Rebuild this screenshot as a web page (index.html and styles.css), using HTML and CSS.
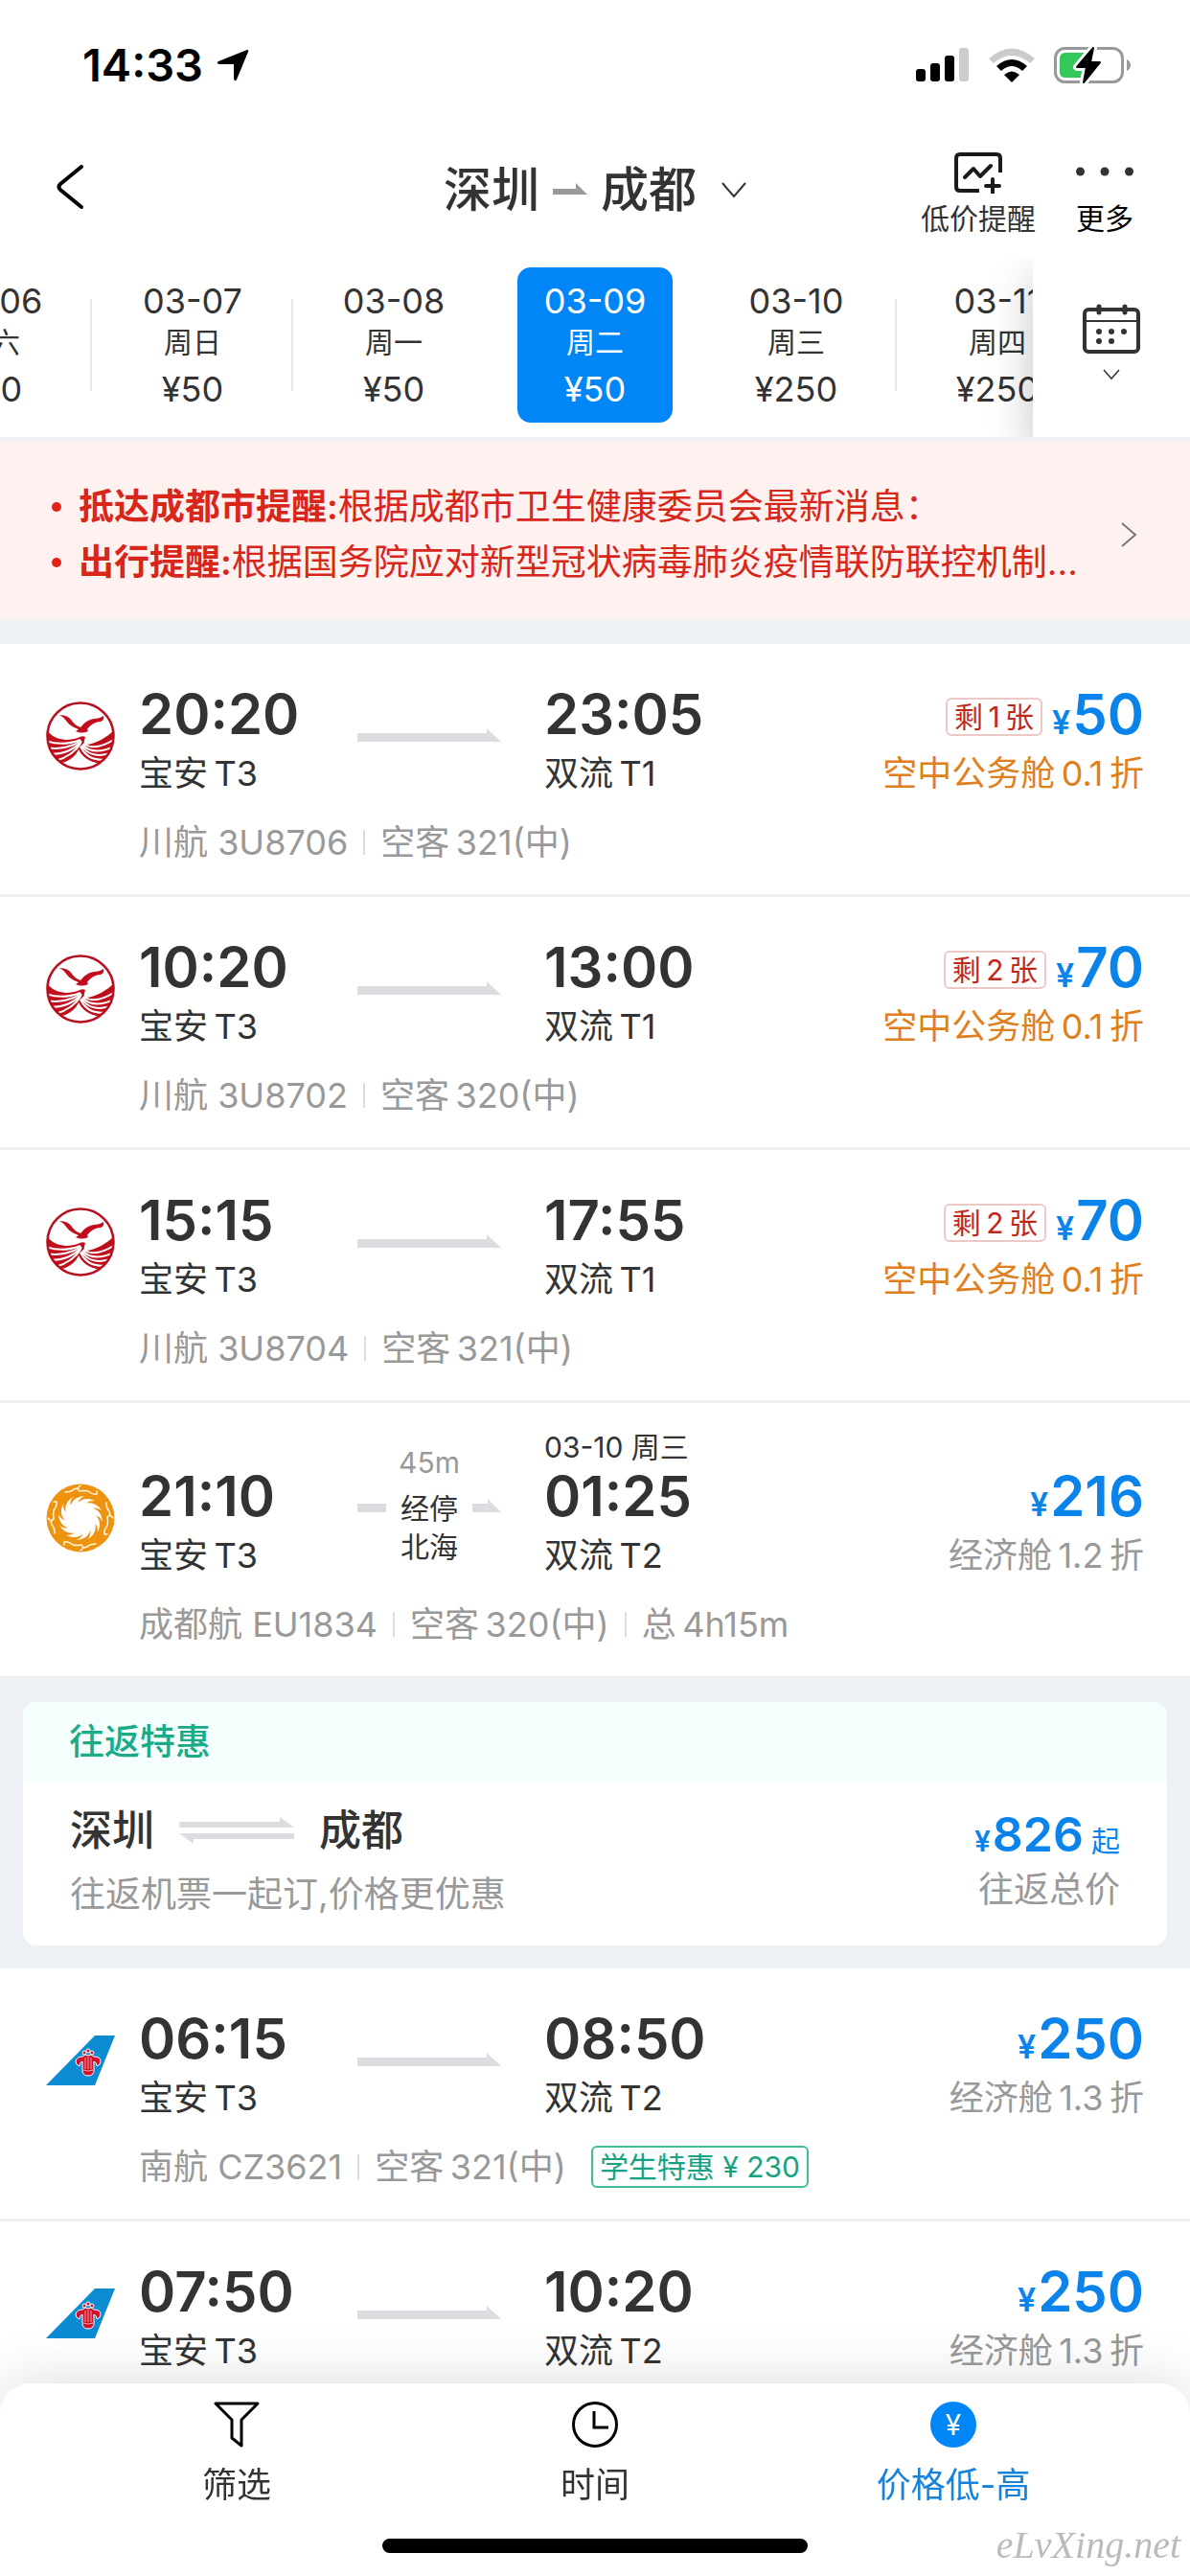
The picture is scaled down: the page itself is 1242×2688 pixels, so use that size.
FILE: index.html
```html
<!DOCTYPE html>
<html lang="zh-CN">
  <head>
    <meta charset="UTF-8" />
    <meta name="viewport" content="width=device-width, initial-scale=1.0" />
    <title>深圳 - 成都</title>
    <link rel="stylesheet" href="styles.css">
  </head>
  <body>
    <!-- shared shapes -->
    <svg class="sprite" aria-hidden="true">
      <symbol id="logo-3u" viewBox="0 0 72 72">
        <clipPath id="disc"><circle cx="36" cy="36" r="35" /></clipPath>
        <g clip-path="url(#disc)">
          <path fill="#c20d1c" d="M0 29C9 42 24 41 33 38Q38 35 41 37Q38 46 42 45C53 44 64 37 72 29V72H0Z" />
          <g fill="none" stroke="#fff" stroke-width="2">
            <path d="M0 41C14 46 28 43 36 40" />
            <path d="M1 48C15 51 29 46 37 41" />
            <path d="M5 55C19 55 30 49 37 42" />
            <path d="M10 62C23 58 31 52 36 44" />
            <path d="M72 39C60 47 48 50 39 44" />
            <path d="M72 46C60 53 46 54 38 45" />
            <path d="M70 53C57 58 44 57 37 46" />
            <path d="M64 60C53 62 42 59 36 47" />
          </g>
          <path fill="#fff" d="M14 65C25 62 31 57 34 50C38 58 45 63 57 65L48 72H24Z" />
        </g>
        <circle cx="36" cy="36" r="34.5" fill="none" stroke="#b8101e" stroke-width="2.6" />
        <path fill="#c20d1c" d="M14 14Q23 14 27 20Q30 25 36 27Q42 19 50 18Q56 18 60 15Q61 20 57 21Q49 21 43 29L44 31Q37 34 31 31L34 29Q25 26 21 20Q18 16 14 14Z" />
      </symbol>
      <symbol id="logo-eu" viewBox="0 0 72 72">
        <circle cx="36" cy="36" r="35.5" fill="#ee930f" />
        <circle cx="36" cy="36" r="16" fill="#fff" />
        <g fill="#fff">
          <path id="ray" d="M25 26Q27 14 40 13Q32 17 34 23Z" />
          <use href="#ray" transform="rotate(30 36 36)" />
          <use href="#ray" transform="rotate(60 36 36)" />
          <use href="#ray" transform="rotate(90 36 36)" />
          <use href="#ray" transform="rotate(120 36 36)" />
          <use href="#ray" transform="rotate(150 36 36)" />
          <use href="#ray" transform="rotate(180 36 36)" />
          <use href="#ray" transform="rotate(210 36 36)" />
          <use href="#ray" transform="rotate(240 36 36)" />
          <use href="#ray" transform="rotate(270 36 36)" />
          <use href="#ray" transform="rotate(300 36 36)" />
          <use href="#ray" transform="rotate(330 36 36)" />
        </g>
        <g fill="none" stroke="#fff3d8" stroke-width="1.6" stroke-linecap="round">
          <path id="bird" d="M20 9Q26 9 29 6Q33 4 35 8Q40 7 44 8Q49 12 53 11M33 5L36 2M53 11L53 8" />
          <use href="#bird" transform="rotate(90 36 36)" />
          <use href="#bird" transform="rotate(180 36 36)" />
          <use href="#bird" transform="rotate(270 36 36)" />
        </g>
      </symbol>
      <symbol id="logo-cz" viewBox="0 0 72 72">
        <path fill="#0a8bd2" d="M0 62L51 10H72L51 62Z" />
        <g fill="#d0122b" stroke="#fff" stroke-width="1">
          <circle cx="40" cy="28" r="2" />
          <circle cx="44" cy="26" r="2" />
          <circle cx="48" cy="28" r="2" />
          <path d="M38 46V37Q35 38 35 42Q31 41 31 37Q32 32 38 32L41 30L44 31L47 30L50 32Q57 32 57 37Q57 41 53 42Q53 38 50 37V46Q50 52 44 52Q38 52 38 46Z" />
          <path d="M41 33V45M44 32V45M47 33V45M39 46Q44 48 49 46" fill="none" stroke-width="0.6" />
        </g>
      </symbol>
      <symbol id="arrow" viewBox="0 0 150 14">
        <path fill="#dcdde0" d="M0 5H135V0L150 14H0Z" />
      </symbol>
    </svg>

    <div class="status-bar">
      <div class="clock">
        <span>14:33</span>
        <svg width="34" height="34" viewBox="0 0 34 34"><path d="M32 1Q34 1 33 3L21 32Q19 35 18 31V16H3Q-1 15 2 13Z" /></svg>
      </div>
      <div class="signals">
        <svg width="56" height="36" viewBox="0 0 56 36">
          <rect x="0" y="22" width="10" height="13" rx="3" />
          <rect x="15" y="16" width="10" height="19" rx="3" />
          <rect x="30" y="8" width="10" height="27" rx="3" />
          <rect x="45" y="0" width="10" height="35" rx="3" fill="#ccc" />
        </svg>
        <svg width="48" height="36" viewBox="0 0 48 36">
          <path fill="#ccc" d="M0 11Q24 -10 48 11L43 16Q24 0 5 16Z" />
          <path d="M8 19Q24 5 40 19L35 24Q24 14 13 24Z" />
          <path d="M16 28Q24 21 32 28L24 36Z" />
        </svg>
        <svg width="80" height="40" viewBox="0 0 80 40">
          <rect x="1.5" y="2.5" width="70" height="35" rx="10" fill="#fff" stroke="#999" stroke-width="3" />
          <path fill="#34c759" d="M12 7H36V33H12Q6 33 6 27V13Q6 7 12 7Z" />
          <path fill="#999" d="M76 14Q80 16 80 20Q80 24 76 26Z" />
          <path stroke="#fff" stroke-width="8" stroke-linejoin="round" d="M41 2L24 22H34L31 38L48 17H38Z" />
          <path stroke="#000" stroke-width="2" stroke-linejoin="round" d="M41 2L24 22H34L31 38L48 17H38Z" />
        </svg>
      </div>
    </div>

    <header class="header">
      <button type="button" class="back" aria-label="返回">
        <svg width="28" height="46" viewBox="0 0 28 46"><path d="M26 2L4 20Q1 23 4 26L26 44" fill="none" stroke="#000" stroke-width="4" stroke-linecap="round" /></svg>
      </button>
      <button type="button" class="route">
        <span>深圳</span>
        <svg width="36" height="14" viewBox="0 0 36 14"><path fill="#999" d="M0 6H24V0L36 12H0Z" /></svg>
        <span>成都</span>
        <svg class="route-more" width="26" height="18" viewBox="0 0 26 18"><path d="M1 2L13 16L25 2" fill="none" stroke="#333" stroke-width="2" /></svg>
      </button>
      <div class="actions">
        <button type="button" class="action">
          <svg width="52" height="44" viewBox="0 0 52 44" fill="none" stroke="#1c1a1c" stroke-width="4">
            <path d="M49 22V7Q49 3 45 3H7Q3 3 3 7V37Q3 41 7 41H27" />
            <path d="M12 27L21 18L28 26L39 15" stroke-linecap="round" stroke-linejoin="round" />
            <path d="M41 29V43M34 36H48" stroke-linecap="round" />
          </svg>
          低价提醒
        </button>
        <button type="button" class="action dark">
          <svg width="60" height="44" viewBox="0 0 60 44" fill="#333">
            <circle cx="4.5" cy="21" r="4.5" />
            <circle cx="30" cy="21" r="4.5" />
            <circle cx="55.5" cy="21" r="4.5" />
          </svg>
          更多
        </button>
      </div>
    </header>

    <nav class="dates">
      <div class="days">
        <button type="button" class="day">03-06<small>周六</small>¥50</button>
        <button type="button" class="day">03-07<small>周日</small>¥50</button>
        <button type="button" class="day">03-08<small>周一</small>¥50</button>
        <button type="button" class="day active">03-09<small>周二</small>¥50</button>
        <button type="button" class="day">03-10<small>周三</small>¥250</button>
        <button type="button" class="day">03-11<small>周四</small>¥250</button>
      </div>
      <button type="button" class="calendar" aria-label="日历">
        <svg width="60" height="52" viewBox="0 0 60 52">
          <rect x="2" y="6" width="56" height="44" rx="4" fill="none" stroke="#333" stroke-width="4" />
          <path d="M2 18H58" stroke="#333" stroke-width="2" />
          <path d="M17 3V9M44 3V9" stroke="#333" stroke-width="5" stroke-linecap="round" />
          <g fill="#333">
            <circle cx="17" cy="29" r="3" /><circle cx="30" cy="29" r="3" /><circle cx="43" cy="29" r="3" />
            <circle cx="17" cy="39" r="3" /><circle cx="30" cy="39" r="3" />
          </g>
        </svg>
        <svg width="18" height="12" viewBox="0 0 18 12"><path d="M1 1L9 10L17 1" fill="none" stroke="#333" stroke-width="1.5" /></svg>
      </button>
    </nav>

    <a class="notice" href="#notice">
      <ul>
        <li><b>抵达成都市提醒:</b>根据成都市卫生健康委员会最新消息：</li>
        <li><b>出行提醒:</b>根据国务院应对新型冠状病毒肺炎疫情联防联控机制...</li>
      </ul>
      <svg width="18" height="26" viewBox="0 0 18 26"><path d="M2 1L16 13L2 25" fill="none" stroke="#777" stroke-width="2" /></svg>
    </a>

    <main>
      <section class="flights">
        <article class="flight">
          <svg class="logo"><use href="#logo-3u" /></svg>
          <div class="place"><time>20:20</time><p>宝安&thinsp;T3</p></div>
          <svg class="arrow"><use href="#arrow" /></svg>
          <div class="place"><time>23:05</time><p>双流&thinsp;T1</p></div>
          <div class="fare">
            <div class="price"><span class="left">剩&thinsp;1&thinsp;张</span><i>¥</i>50</div>
            <p class="business">空中公务舱&thinsp;0.1&thinsp;折</p>
          </div>
          <div class="meta"><span>川航 3U8706</span><span>空客&thinsp;321(中)</span></div>
        </article>

        <article class="flight">
          <svg class="logo"><use href="#logo-3u" /></svg>
          <div class="place"><time>10:20</time><p>宝安&thinsp;T3</p></div>
          <svg class="arrow"><use href="#arrow" /></svg>
          <div class="place"><time>13:00</time><p>双流&thinsp;T1</p></div>
          <div class="fare">
            <div class="price"><span class="left">剩&thinsp;2&thinsp;张</span><i>¥</i>70</div>
            <p class="business">空中公务舱&thinsp;0.1&thinsp;折</p>
          </div>
          <div class="meta"><span>川航 3U8702</span><span>空客&thinsp;320(中)</span></div>
        </article>

        <article class="flight">
          <svg class="logo"><use href="#logo-3u" /></svg>
          <div class="place"><time>15:15</time><p>宝安&thinsp;T3</p></div>
          <svg class="arrow"><use href="#arrow" /></svg>
          <div class="place"><time>17:55</time><p>双流&thinsp;T1</p></div>
          <div class="fare">
            <div class="price"><span class="left">剩&thinsp;2&thinsp;张</span><i>¥</i>70</div>
            <p class="business">空中公务舱&thinsp;0.1&thinsp;折</p>
          </div>
          <div class="meta"><span>川航 3U8704</span><span>空客&thinsp;321(中)</span></div>
        </article>

        <article class="flight with-stop">
          <svg class="logo"><use href="#logo-eu" /></svg>
          <div class="place"><time>21:10</time><p>宝安&thinsp;T3</p></div>
          <div class="stop">
            <svg width="30" height="14" viewBox="0 0 30 14"><path fill="#dcdde0" d="M0 5H30V14H0Z" /></svg>
            <p><span>45m</span>经停<br>北海</p>
            <svg width="30" height="14" viewBox="0 0 30 14"><path fill="#dcdde0" d="M0 5H16V0L30 14H0Z" /></svg>
          </div>
          <div class="place"><small>03-10 周三</small><time>01:25</time><p>双流&thinsp;T2</p></div>
          <div class="fare">
            <div class="price"><i>¥</i>216</div>
            <p>经济舱&thinsp;1.2&thinsp;折</p>
          </div>
          <div class="meta"><span>成都航 EU1834</span><span>空客&thinsp;320(中)</span><span>总&thinsp;4h15m</span></div>
        </article>
      </section>

      <section class="round-trip">
        <h2>往返特惠</h2>
        <div class="round-body">
          <div>
            <div class="round-route">
              <span>深圳</span>
              <svg width="120" height="28" viewBox="0 0 120 28" fill="#dcdde0">
                <path d="M0 5H105V0L120 11H0Z" />
                <path d="M120 23H15V28L0 17H120Z" />
              </svg>
              <span>成都</span>
            </div>
            <p>往返机票一起订,价格更优惠</p>
          </div>
          <div class="round-fare">
            <div class="round-price"><i>¥</i>826<small>起</small></div>
            <p>往返总价</p>
          </div>
        </div>
      </section>

      <section class="flights">
        <article class="flight">
          <svg class="logo"><use href="#logo-cz" /></svg>
          <div class="place"><time>06:15</time><p>宝安&thinsp;T3</p></div>
          <svg class="arrow"><use href="#arrow" /></svg>
          <div class="place"><time>08:50</time><p>双流&thinsp;T2</p></div>
          <div class="fare">
            <div class="price"><i>¥</i>250</div>
            <p>经济舱&thinsp;1.3&thinsp;折</p>
          </div>
          <div class="meta"><span>南航 CZ3621</span><span>空客&thinsp;321(中)</span><em>学生特惠 ¥ 230</em></div>
        </article>

        <article class="flight">
          <svg class="logo"><use href="#logo-cz" /></svg>
          <div class="place"><time>07:50</time><p>宝安&thinsp;T3</p></div>
          <svg class="arrow"><use href="#arrow" /></svg>
          <div class="place"><time>10:20</time><p>双流&thinsp;T2</p></div>
          <div class="fare">
            <div class="price"><i>¥</i>250</div>
            <p>经济舱&thinsp;1.3&thinsp;折</p>
          </div>
        </article>
      </section>
    </main>

    <footer class="tab-bar">
      <div class="tabs">
        <button type="button" class="tab">
          <svg width="48" height="48" viewBox="0 0 48 48"><path d="M2 2H46L29 19V46L19 38V19Z" fill="none" stroke="#000" stroke-width="3" stroke-linejoin="round" /></svg>
          筛选
        </button>
        <button type="button" class="tab">
          <svg width="48" height="48" viewBox="0 0 48 48" fill="none" stroke="#000" stroke-width="3"><circle cx="24" cy="24" r="22.5" /><path d="M23 10V27H38" /></svg>
          时间
        </button>
        <button type="button" class="tab active">
          <span class="coin">¥</span>
          价格低-高
        </button>
      </div>
      <div class="home-line"></div>
      <span class="site">eLvXing.net</span>
    </footer>
  </body>
</html>
```
FILE: styles.css
```css
html {
  box-sizing: border-box;
}

*,
*:before,
*:after {
  box-sizing: inherit;
}

body,
h2,
p,
ul {
  margin: 0;
  padding: 0;
}

body {
  font-family: Inter, "Noto Sans CJK SC", sans-serif;
  font-size: 36px;
  color: #333;
  background-color: #fff;
}

button {
  border: none;
  background: none;
  padding: 0;
  margin: 0;
  font-family: inherit;
  font-size: inherit;
  color: inherit;
  cursor: pointer;
}

svg {
  display: block;
  flex-shrink: 0;
}

i,
em {
  font-style: normal;
}

.sprite {
  position: absolute;
  width: 0;
  height: 0;
}

/* status bar */
.status-bar {
  display: flex;
  justify-content: space-between;
  align-items: center;
  padding: 34px 62px 24px 86px;
  color: #000;
}

.clock {
  display: flex;
  align-items: center;
  gap: 14px;
  font-size: 47px;
  font-weight: 600;
  line-height: 68px;
}

.signals {
  display: flex;
  align-items: center;
  gap: 20px;
}

/* header */
.header {
  display: grid;
  grid-template-columns: 1fr auto 1fr;
  align-items: center;
  height: 144px;
  padding: 0 59px;
}

.back {
  justify-self: start;
  padding-bottom: 6px;
}

.route {
  display: flex;
  align-items: center;
  gap: 14px;
  font-size: 50px;
  font-weight: 500;
  line-height: 60px;
}

.route-more {
  margin-left: 12px;
}

.actions {
  display: flex;
  justify-self: end;
  gap: 42px;
  padding-top: 8px;
}

.action {
  display: flex;
  flex-direction: column;
  align-items: center;
  gap: 8px;
  font-size: 30px;
  line-height: 36px;

  &.dark {
    color: #000;
  }
}

/* date strip */
.dates {
  display: flex;
  overflow: hidden;
  border-bottom: 3px solid #edf0f5;
}

.days {
  flex: 1;
  display: flex;
  min-width: 0;
  margin-left: -114px;
  padding: 9px 0 15px;
}

.day {
  position: relative;
  flex: 0 0 162px;
  height: 162px;
  margin: 0 24px;
  padding: 13px 0;
  border-radius: 14px;
  line-height: 44px;

  small {
    display: block;
    font-size: 30px;
    line-height: 42px;
    margin-bottom: 6px;
  }

  &:after {
    content: "";
    position: absolute;
    right: -24px;
    top: 33px;
    height: 96px;
    border-right: 2px solid #e6e6e6;
  }

  &.active {
    background-color: #0086f6;
    color: #fff;
  }

  &.active:after,
  &:has(+ .active):after {
    display: none;
  }
}

.calendar {
  position: relative;
  width: 164px;
  padding-bottom: 12px;
  display: flex;
  flex-direction: column;
  align-items: center;
  justify-content: center;
  gap: 16px;
  background-color: #fff;
  box-shadow: 0 20px 44px rgba(0, 0, 0, 0.24);
}

/* notice */
.notice {
  display: flex;
  justify-content: space-between;
  align-items: center;
  padding: 41px 55px 31px 54px;
  background-color: #fef2f0;
  color: #d8261a;
  text-decoration: none;
  border-bottom: 1px solid #edf0f5;

  ul {
    list-style: none;
    min-width: 0;
  }

  li {
    display: flex;
    align-items: center;
    font-size: 37px;
    line-height: 58px;
    white-space: nowrap;
  }

  li:before {
    content: "";
    width: 10px;
    height: 10px;
    margin-right: 18px;
    border-radius: 50%;
    background-color: #e02418;
  }

  b {
    font-weight: 600;
  }
}

/* flights */
main {
  background-color: #edf0f5;
  padding-top: 24px;
}

.flights {
  background-color: #fff;
}

.flight {
  display: grid;
  grid-template-columns: 72px 203px 150px auto 1fr;
  column-gap: 25px;
  align-items: end;
  padding: 40px 48px 25px;
  border-bottom: 3px solid #eceeef;

  &.with-stop {
    padding-top: 28px;
  }

  &:last-child {
    border-bottom: none;
  }

  p {
    line-height: 58px;
    white-space: nowrap;
  }
}

.logo {
  width: 72px;
  height: 72px;
  margin-bottom: 32px;
}

.arrow {
  width: 150px;
  height: 14px;
  margin-bottom: 62px;
}

.place {
  time {
    display: block;
    font-size: 58px;
    font-weight: 600;
    line-height: 66px;
  }

  small {
    display: block;
    font-size: 30px;
    line-height: 36px;
  }
}

.arrow + .place,
.stop + .place {
  margin-left: 20px;
}

.stop {
  display: flex;
  justify-content: space-between;
  align-items: end;
  margin-bottom: 18px;

  svg {
    margin-bottom: 56px;
  }

  p {
    font-size: 30px;
    line-height: 40px;
    text-align: center;
  }

  span {
    display: block;
    margin-bottom: 8px;
    color: #999;
  }
}

.fare {
  text-align: right;
  color: #999;

  .business {
    color: #e07f1c;
  }
}

.price {
  display: flex;
  justify-content: flex-end;
  align-items: baseline;
  font-size: 58px;
  font-weight: 600;
  line-height: 66px;
  color: #0a84ea;

  i {
    font-size: 34px;
    line-height: 36px;
    margin-right: 2px;
  }
}

.left {
  align-self: center;
  margin: 6px 10px 0 0;
  padding: 0 7px;
  border: 2px solid #ecc9c6;
  border-radius: 6px;
  font-size: 30px;
  font-weight: 400;
  line-height: 36px;
  color: #c3271c;
}

.meta {
  grid-column: 2 / -1;
  display: flex;
  align-items: center;
  margin-top: 14px;
  line-height: 58px;
  color: #999;

  span + span {
    display: flex;
    align-items: center;
  }

  span + span:before {
    content: "";
    height: 26px;
    margin: 0 16px;
    border-left: 2px solid #ddd;
  }

  em {
    margin-left: 26px;
    padding: 0 7px;
    border: 2px solid #45b99c;
    border-radius: 6px;
    font-size: 30px;
    line-height: 40px;
    color: #17a382;
  }
}

/* round trip */
.round-trip {
  margin: 27px 24px 24px;
  border-radius: 14px;
  background-color: #fff;
  overflow: hidden;

  h2 {
    padding: 0 48px;
    background-color: #f4fefc;
    color: #1aab87;
    font-size: 37px;
    font-weight: 500;
    line-height: 83px;
  }
}

.round-body {
  display: flex;
  justify-content: space-between;
  padding: 20px 49px 24px;

  p {
    font-size: 37px;
    line-height: 58px;
    color: #999;
  }
}

.round-route {
  display: flex;
  align-items: center;
  gap: 26px;
  font-size: 44px;
  font-weight: 500;
  line-height: 62px;
  margin-bottom: 7px;
}

.round-fare {
  text-align: right;
}

.round-price {
  display: flex;
  justify-content: flex-end;
  align-items: baseline;
  padding-top: 6px;
  font-size: 50px;
  font-weight: 600;
  line-height: 58px;
  color: #0a84ea;

  i {
    font-size: 30px;
    line-height: 36px;
    margin-right: 2px;
  }

  small {
    font-size: 30px;
    font-weight: 400;
    line-height: 36px;
    margin-left: 8px;
  }
}

/* bottom bar */
.tab-bar {
  position: fixed;
  left: 0;
  right: 0;
  bottom: 0;
  padding: 19px 60px 24px;
  border-radius: 32px 32px 0 0;
  background-color: #fff;
  box-shadow: 0 -4px 60px rgba(0, 0, 0, 0.13);
}

.tabs {
  display: grid;
  grid-template-columns: repeat(3, 1fr);
}

.tab {
  display: flex;
  flex-direction: column;
  align-items: center;
  gap: 14px;
  line-height: 50px;

  &.active {
    color: #1583dc;
  }
}

.coin {
  width: 48px;
  height: 48px;
  border-radius: 50%;
  background-color: #0086f6;
  color: #fff;
  font-size: 30px;
  line-height: 48px;
}

.home-line {
  width: 444px;
  height: 15px;
  margin: 31px auto 0;
  border-radius: 8px;
  background-color: #000;
}

.site {
  position: absolute;
  right: 10px;
  bottom: 8px;
  font-family: "Liberation Serif", serif;
  font-style: italic;
  font-size: 40px;
  line-height: 48px;
  color: #bbb;
}
```
